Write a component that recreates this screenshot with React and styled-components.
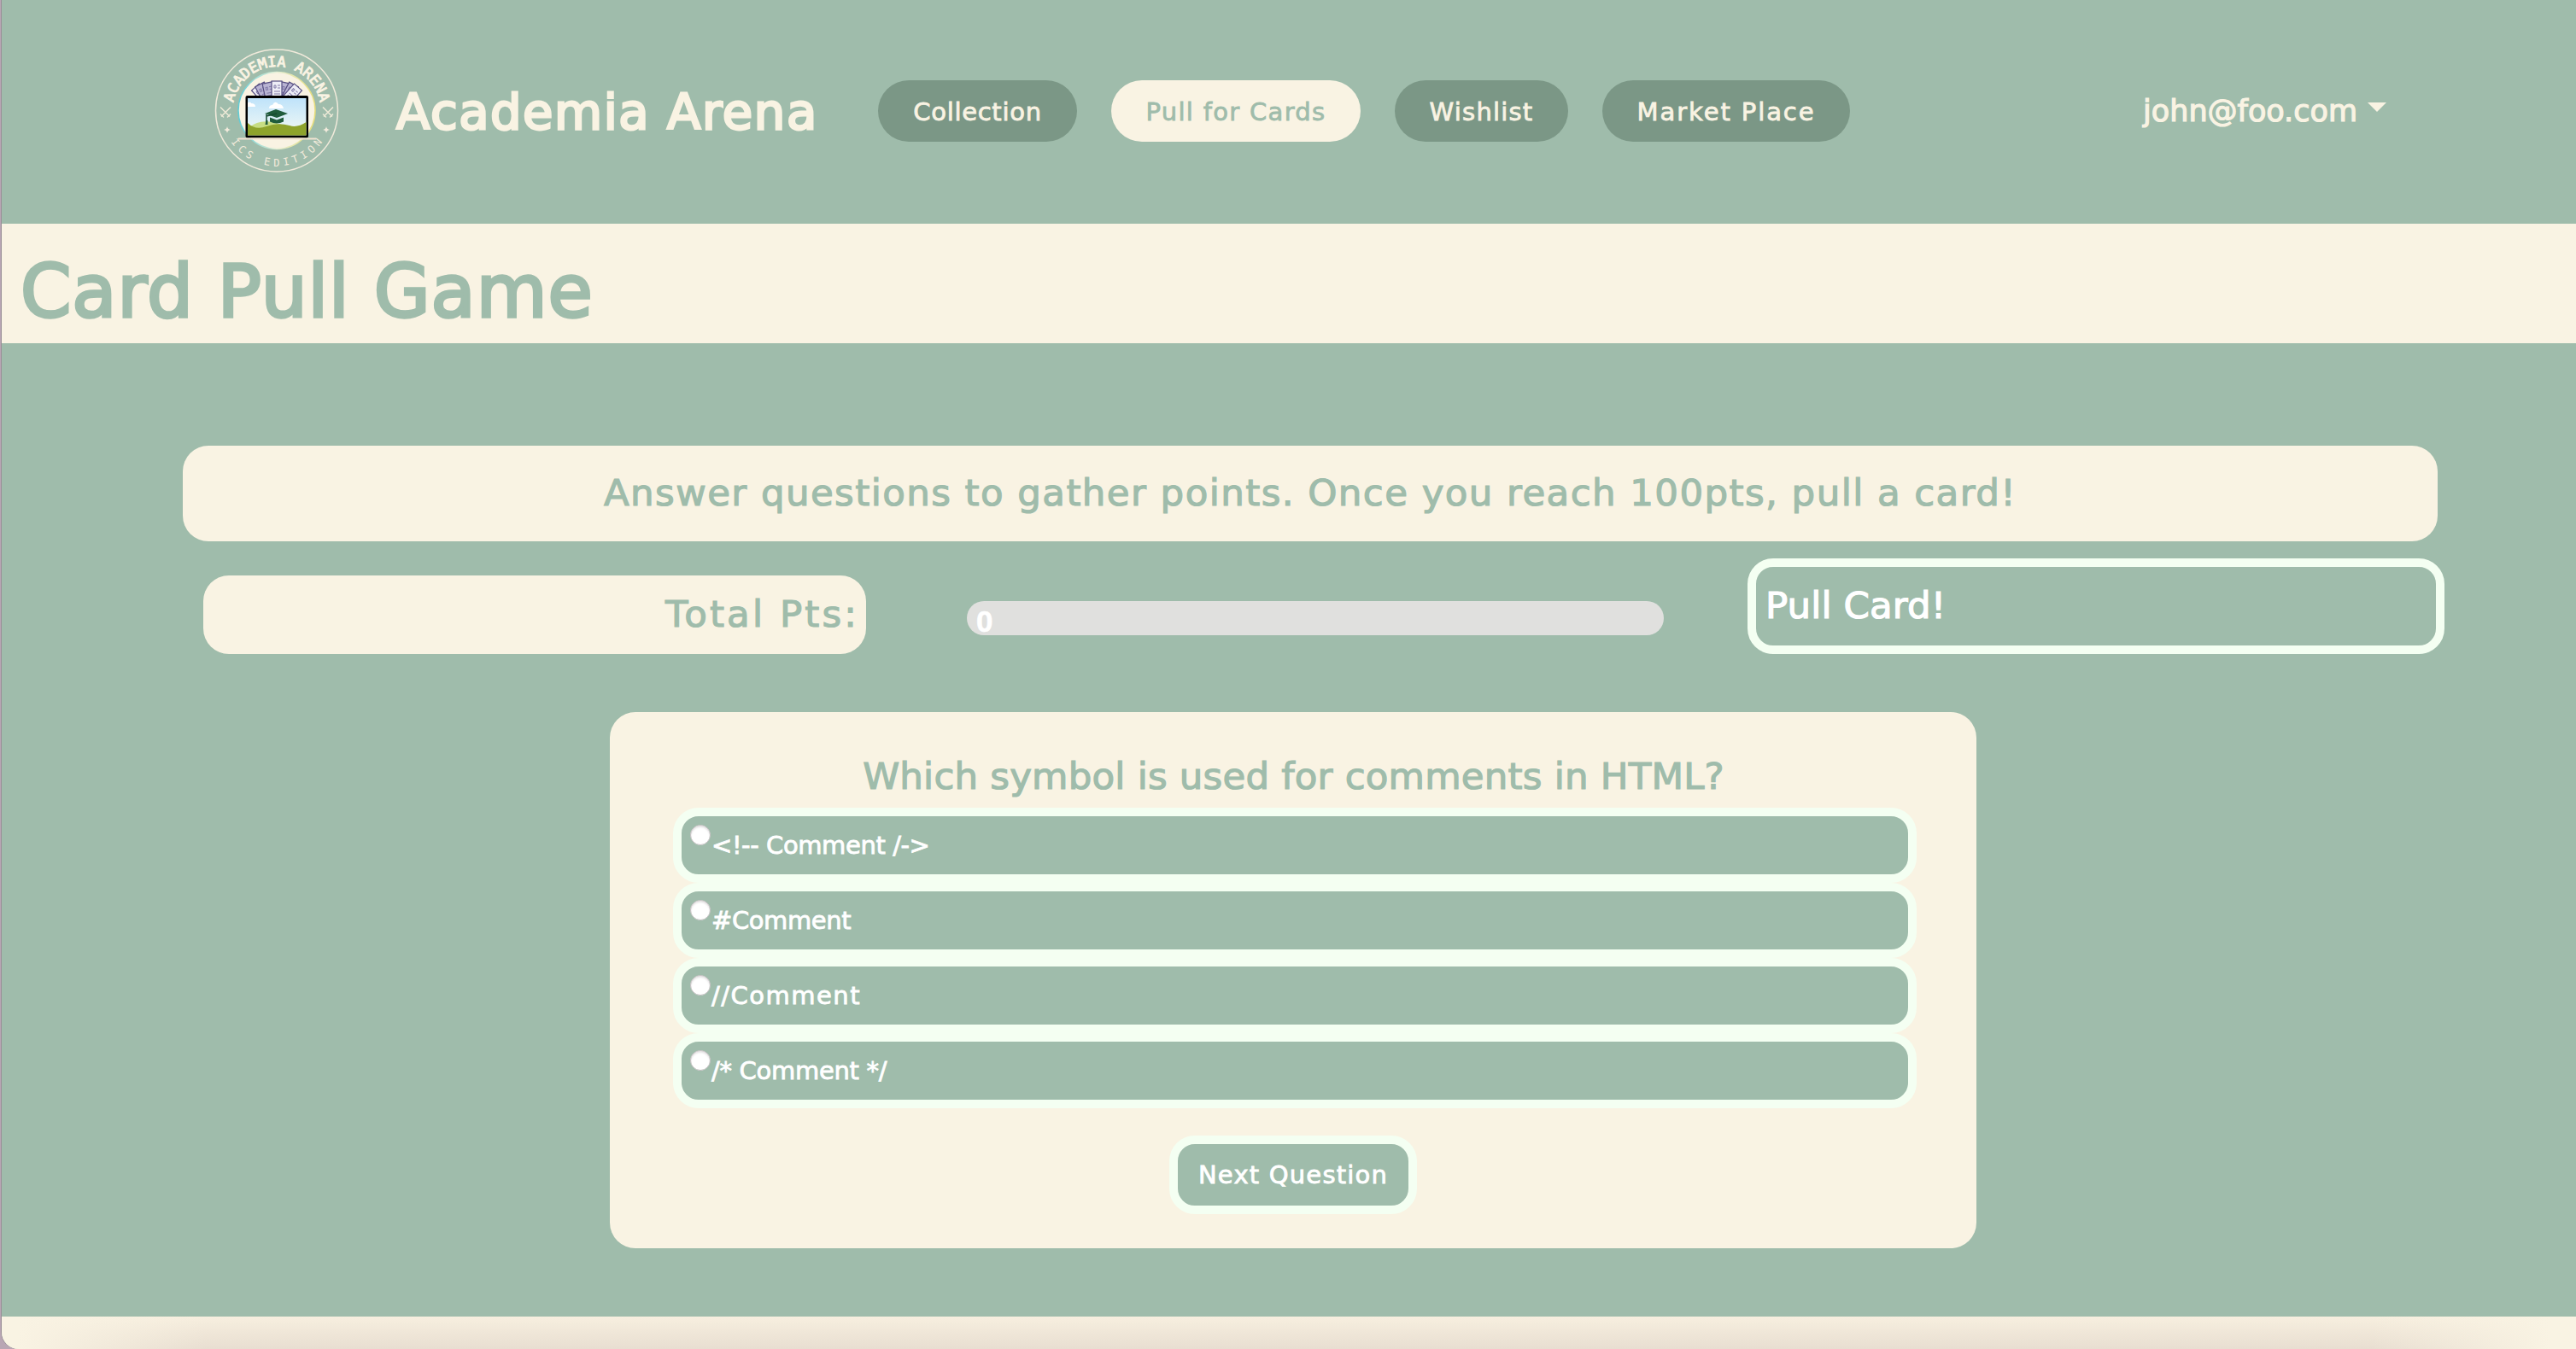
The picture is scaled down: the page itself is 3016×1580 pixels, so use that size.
import React from "react";
import styled, { createGlobalStyle } from "styled-components";

const sage = "#9fbcab";
const cream = "#f9f3e3";
const mint = "#f4fff2";
const moss = "#7b9786";

const GlobalStyle = createGlobalStyle`
  * { box-sizing: border-box; }
  body {
    margin: 0;
    background: #b9a6b4;
    font-family: "DejaVu Sans", "Noto Sans", sans-serif;
  }
`;

const Page = styled.div`
  width: 3014px;
  height: 1580px;
  margin-left: 2px;
  overflow: hidden;
  display: flex;
  flex-direction: column;
  background: ${sage};
  border-bottom-left-radius: 20px;
  box-shadow: -1px 0 0 #9a8f98;
`;

const Label = styled.span`
  display: block;
  white-space: pre;
  font-size: ${(p) => p.$size || 29}px;
  line-height: 1;
  letter-spacing: ${(p) => p.$track || 0}px;
  -webkit-text-stroke: ${(p) => p.$stroke || 0.8}px currentColor;
`;

const Header = styled.header`
  height: 260px;
  flex: none;
  display: flex;
  align-items: center;
  padding: 0 222px 0 248px;
  color: ${cream};
`;

const Logo = styled.svg`
  width: 148px;
  height: 148px;
  flex: none;
  font-family: "DejaVu Sans Mono", monospace;
`;

const Brand = styled.div`
  width: 630px;
  padding: 3px 0 0 66px;
`;

const Nav = styled.nav`
  display: flex;
  gap: 40px;
`;

const Pill = styled.a`
  width: ${(p) => p.$width}px;
  height: 72px;
  padding-top: 2px;
  display: flex;
  align-items: center;
  justify-content: center;
  border-radius: 36px;
  background: ${(p) => (p.$active ? cream : moss)};
  color: ${(p) => (p.$active ? sage : cream)};
`;

const Account = styled.div`
  display: flex;
  align-items: center;
  gap: 12px;
  margin-left: auto;
`;

const Caret = styled.i`
  margin-top: -10px;
  border: 11px solid transparent;
  border-top-color: ${cream};
  border-bottom-width: 0;
`;

const TitleBar = styled.div`
  height: 140px;
  margin-top: 2px;
  flex: none;
  padding: 37px 0 0 22px;
  background: ${cream};
  color: ${sage};
`;

const Title = styled.h1`
  margin: 0;
  font-weight: 400;
`;

const Main = styled.main`
  flex: none;
  height: 1140px;
  padding-top: 120px;
  display: flex;
  flex-direction: column;
`;

const Banner = styled.div`
  width: 2640px;
  height: 112px;
  margin-left: 212px;
  display: flex;
  align-items: center;
  justify-content: center;
  border-radius: 30px;
  background: ${cream};
  color: ${sage};
`;

const Status = styled.div`
  display: flex;
  align-items: flex-end;
  margin: 20px 0 0 236px;
`;

const Total = styled.div`
  width: 776px;
  height: 92px;
  padding-right: 8px;
  display: flex;
  align-items: center;
  justify-content: flex-end;
  border-radius: 30px;
  background: ${cream};
  color: ${sage};
`;

const Progress = styled.div`
  width: 816px;
  height: 40px;
  margin: 0 98px 22px 118px;
  padding: 7px 0 0 11px;
  border-radius: 20px;
  background: #e0e0de;
  color: #fff;
  font: bold 35px/34px "Liberation Sans", Arial, sans-serif;
  -webkit-text-stroke: 0.6px #fff;
`;

const PullButton = styled.div`
  width: 816px;
  height: 112px;
  padding-left: 11px;
  display: flex;
  align-items: center;
  border: 10px solid ${mint};
  border-radius: 30px;
  color: #fff;
`;

const Quiz = styled.section`
  width: 1600px;
  height: 628px;
  margin: 68px 0 0 712px;
  padding: 54px 70px 0 74px;
  display: flex;
  flex-direction: column;
  border-radius: 30px;
  background: ${cream};
`;

const Question = styled.div`
  height: 58px;
  margin-right: 3px;
  display: flex;
  justify-content: center;
  color: ${sage};
`;

const Option = styled.label`
  height: 88px;
  padding: 10px;
  display: flex;
  gap: 1px;
  border: 10px solid ${mint};
  border-radius: 30px;
  background: ${sage};
  color: #fff;

  ${Label} {
    margin-top: 10px;
  }
`;

const Radio = styled.span`
  width: 24px;
  height: 24px;
  flex: none;
  border: 1px solid #c5c0c2;
  border-radius: 50%;
  background: #fff;
  box-shadow: inset 0 2px 2px #e6e4e5;
`;

const NextButton = styled.button`
  align-self: center;
  width: 290px;
  height: 92px;
  margin-top: 32px;
  margin-right: 4px;
  padding: 0;
  display: flex;
  align-items: center;
  justify-content: center;
  border: 10px solid ${mint};
  border-radius: 30px;
  background: ${sage};
  color: #fff;
  font-family: inherit;
`;

const Footer = styled.footer`
  flex: 1;
  background:
    linear-gradient(90deg, ${cream} 20px, transparent 240px, transparent calc(100% - 240px), ${cream} calc(100% - 30px)),
    linear-gradient(#f7efdf, #e8ded1);
`;

const links = [
  { text: "Collection", width: 233, track: 0.7 },
  { text: "Pull for Cards", width: 292, track: 1.3, active: true },
  { text: "Wishlist", width: 203, track: 1.2 },
  { text: "Market Place", width: 290, track: 1.9 },
];

const options = [
  { text: "<!-- Comment /->", track: -0.4 },
  { text: "#Comment", track: -0.4 },
  { text: "//Comment", track: 1.5 },
  { text: "/* Comment */", track: -0.3 },
];

function Swords({ x, y }) {
  return (
    <g transform={`translate(${x} ${y})`} stroke="#ece9d6" fill="none">
      <path d="M-6-6 5 5M6-6-5 5" strokeWidth="1.6" />
      <path d="M-6 2-2 6M6 2 2 6" strokeWidth="1.4" />
    </g>
  );
}

function Sheet({ angle, x, y, fill = "#b9b4d3" }) {
  return (
    <g transform={`translate(${x} ${y}) rotate(${angle})`}>
      <rect x="-6" y="0" width="12" height="24" fill={fill} stroke="#585083" strokeWidth="1.2" />
      <path d="M-3 5h2v3h-2zM1 5h3M1 8h3M-3 12h7M-3 15h7" fill="none" stroke="#817aa8" />
    </g>
  );
}

function Emblem() {
  return (
    <Logo viewBox="0 0 148 148">
      <defs>
        <path id="arcTop" d="M22.500 73.500a51.500 51.500 0 0 1 103 0" />
        <path id="arcBottom" d="M9 73.500a65 65 0 0 0 130 0" />
        <linearGradient id="ring">
          <stop offset="0" stopColor="#61cbd5" />
          <stop offset=".5" stopColor="#e5efd5" />
          <stop offset="1" stopColor="#e7dd79" />
        </linearGradient>
        <linearGradient id="sky" x2="0" y2="1">
          <stop offset="0" stopColor="#bfe3fa" />
          <stop offset="1" stopColor="#f4faf5" />
        </linearGradient>
      </defs>
      <circle cx="74" cy="73.500" r="71.500" fill="none" stroke="#f1eadb" strokeWidth="1.500" />
      <circle cx="74" cy="73.500" r="45" fill={cream} stroke="url(#ring)" strokeWidth="1.500" />
      <text fill={cream} stroke={cream} strokeWidth=".9" fontSize="17" textAnchor="middle">
        <textPath href="#arcTop" startOffset="50%" textLength="143" lengthAdjust="spacing">
          ACADEMIA ARENA
        </textPath>
      </text>
      <text fill="#f1eadb" fontSize="12" textAnchor="middle">
        <textPath href="#arcBottom" startOffset="50%" textLength="126" lengthAdjust="spacing">
          ICS EDITION
        </textPath>
      </text>
      <Swords x={14} y={75.5} />
      <Swords x={134} y={75.5} />
      <path
        d="M16 92q.5 3.500 4 4-3.500.5-4 4-.5-3.500-4-4 3.500-.5 4-4zM132 92q.5 3.500 4 4-3.500.5-4 4-.5-3.500-4-4 3.500-.5 4-4z"
        fill="#f1eadb"
      />
      <Sheet x={49} y={46} angle={-42} fill="#eeedf6" />
      <Sheet x={54} y={43} angle={-28} />
      <Sheet x={63} y={41} angle={-12} />
      <Sheet x={85} y={41} angle={12} />
      <Sheet x={94} y={43} angle={28} />
      <Sheet x={99} y={46} angle={42} fill="#eeedf6" />
      <Sheet x={74} y={39} angle={0} fill="#eeedf6" />
      <rect x="37.500" y="56" width="73.500" height="49.500" rx="2" fill="#000" />
      <rect x="40" y="59" width="68.500" height="43.500" fill="url(#sky)" />
      <path d="M65 71q0-4 4-4 3-6 7-1 5 0 6 5zM40 69v-5q4-1 4 1 5 0 5 4z" fill="#fff" />
      <path d="M42 93q14-12 38-3l-4 9H42z" fill="#c7dd83" />
      <path d="M40 88q9 9 22 4t27-1q9 3 19.500-4v15.500H40z" fill="#8ea32c" />
      <path d="M60 77l13-5 14 5-13 5z" fill="#205c3c" />
      <path d="M66 81.500l8 3 8-3v5q-8 4-16 0z" fill="#205c3c" />
      <path d="M62 78v10M74 77l-12 3" stroke="#174a30" strokeWidth="1.500" fill="none" />
      <path d="M60.500 90l1-5h2v5z" fill="#205c3c" />
      <path d="M29 105.500h91v2H29z" fill="#f1e2d2" />
    </Logo>
  );
}

export default function App() {
  return (
    <>
      <GlobalStyle />
      <Page>
        <Header>
          <Emblem />
          <Brand>
            <Label $size={57.5} $track={1.6} $stroke={2.8}>Academia Arena</Label>
          </Brand>
          <Nav>
            {links.map((link) => (
              <Pill key={link.text} $width={link.width} $active={link.active}>
                <Label $track={link.track}>{link.text}</Label>
              </Pill>
            ))}
          </Nav>
          <Account>
            <Label $size={35} $stroke={1.2}>john@foo.com</Label>
            <Caret />
          </Account>
        </Header>
        <TitleBar>
          <Title>
            <Label $size={85} $track={1} $stroke={3.4}>Card Pull Game</Label>
          </Title>
        </TitleBar>
        <Main>
          <Banner>
            <Label $size={43.5} $track={1.42} $stroke={1.2}>
              Answer questions to gather points. Once you reach 100pts, pull a card!
            </Label>
          </Banner>
          <Status>
            <Total>
              <Label $size={43.5} $track={3.1} $stroke={1.2}>Total Pts:</Label>
            </Total>
            <Progress>0</Progress>
            <PullButton>
              <Label $size={43.5} $track={0.1} $stroke={1.2}>Pull Card!</Label>
            </PullButton>
          </Status>
          <Quiz>
            <Question>
              <Label $size={43.5} $track={0.2} $stroke={1.2}>
                Which symbol is used for comments in HTML?
              </Label>
            </Question>
            {options.map((option) => (
              <Option key={option.text}>
                <Radio />
                <Label $track={option.track}>{option.text}</Label>
              </Option>
            ))}
            <NextButton>
              <Label $track={1.2}>Next Question</Label>
            </NextButton>
          </Quiz>
        </Main>
        <Footer />
      </Page>
    </>
  );
}
